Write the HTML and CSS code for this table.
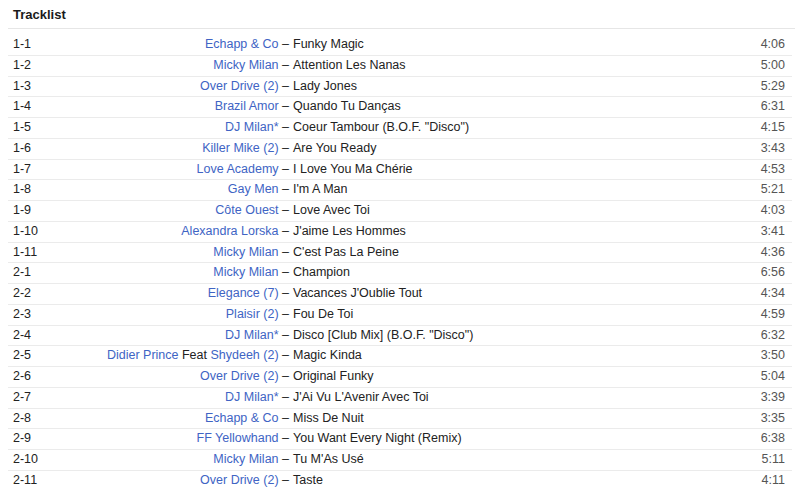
FILE: index.html
```html
<!DOCTYPE html>
<html>
<head>
<meta charset="utf-8">
<link rel="stylesheet" href="styles.css">
</head>
<body>
<section class="tracklist">
  <h2 class="heading">Tracklist</h2>
  <table class="tracks">
    <tbody>
      <tr><td class="pos">1-1</td><td class="artist"><a>Echapp &amp; Co</a> –</td><td class="title">Funky Magic</td><td class="dur">4:06</td></tr>
      <tr><td class="pos">1-2</td><td class="artist"><a>Micky Milan</a> –</td><td class="title">Attention Les Nanas</td><td class="dur">5:00</td></tr>
      <tr><td class="pos">1-3</td><td class="artist"><a>Over Drive (2)</a> –</td><td class="title">Lady Jones</td><td class="dur">5:29</td></tr>
      <tr><td class="pos">1-4</td><td class="artist"><a>Brazil Amor</a> –</td><td class="title">Quando Tu Danças</td><td class="dur">6:31</td></tr>
      <tr><td class="pos">1-5</td><td class="artist"><a>DJ Milan*</a> –</td><td class="title">Coeur Tambour (B.O.F. "Disco")</td><td class="dur">4:15</td></tr>
      <tr><td class="pos">1-6</td><td class="artist"><a>Killer Mike (2)</a> –</td><td class="title">Are You Ready</td><td class="dur">3:43</td></tr>
      <tr><td class="pos">1-7</td><td class="artist"><a>Love Academy</a> –</td><td class="title">I Love You Ma Chérie</td><td class="dur">4:53</td></tr>
      <tr><td class="pos">1-8</td><td class="artist"><a>Gay Men</a> –</td><td class="title">I'm A Man</td><td class="dur">5:21</td></tr>
      <tr><td class="pos">1-9</td><td class="artist"><a>Côte Ouest</a> –</td><td class="title">Love Avec Toi</td><td class="dur">4:03</td></tr>
      <tr><td class="pos">1-10</td><td class="artist"><a>Alexandra Lorska</a> –</td><td class="title">J'aime Les Hommes</td><td class="dur">3:41</td></tr>
      <tr><td class="pos">1-11</td><td class="artist"><a>Micky Milan</a> –</td><td class="title">C'est Pas La Peine</td><td class="dur">4:36</td></tr>
      <tr><td class="pos">2-1</td><td class="artist"><a>Micky Milan</a> –</td><td class="title">Champion</td><td class="dur">6:56</td></tr>
      <tr><td class="pos">2-2</td><td class="artist"><a>Elegance (7)</a> –</td><td class="title">Vacances J'Oublie Tout</td><td class="dur">4:34</td></tr>
      <tr><td class="pos">2-3</td><td class="artist"><a>Plaisir (2)</a> –</td><td class="title">Fou De Toi</td><td class="dur">4:59</td></tr>
      <tr><td class="pos">2-4</td><td class="artist"><a>DJ Milan*</a> –</td><td class="title">Disco [Club Mix] (B.O.F. "Disco")</td><td class="dur">6:32</td></tr>
      <tr><td class="pos">2-5</td><td class="artist"><a>Didier Prince</a> Feat <a>Shydeeh (2)</a> –</td><td class="title">Magic Kinda</td><td class="dur">3:50</td></tr>
      <tr><td class="pos">2-6</td><td class="artist"><a>Over Drive (2)</a> –</td><td class="title">Original Funky</td><td class="dur">5:04</td></tr>
      <tr><td class="pos">2-7</td><td class="artist"><a>DJ Milan*</a> –</td><td class="title">J'Ai Vu L'Avenir Avec Toi</td><td class="dur">3:39</td></tr>
      <tr><td class="pos">2-8</td><td class="artist"><a>Echapp &amp; Co</a> –</td><td class="title">Miss De Nuit</td><td class="dur">3:35</td></tr>
      <tr><td class="pos">2-9</td><td class="artist"><a>FF Yellowhand</a> –</td><td class="title">You Want Every Night (Remix)</td><td class="dur">6:38</td></tr>
      <tr><td class="pos">2-10</td><td class="artist"><a>Micky Milan</a> –</td><td class="title">Tu M'As Usé</td><td class="dur">5:11</td></tr>
      <tr><td class="pos">2-11</td><td class="artist"><a>Over Drive (2)</a> –</td><td class="title">Taste</td><td class="dur">4:11</td></tr>
    </tbody>
  </table>
</section>
</body>
</html>
```

FILE: styles.css
```css
html, body {
  margin: 0;
  padding: 0;
  background: #ffffff;
}

body {
  font-family: "Liberation Sans", Arial, sans-serif;
  color: #222222;
}

.tracklist {
  padding: 0 8px;
}

.heading {
  margin: 0;
  padding: 6px 5px 4px;
  font-size: 13px;
  line-height: 18px;
  font-weight: bold;
  color: #1a1a1a;
  border-bottom: 1px solid #e6e6e6;
  margin-right: -3px;
}

.tracks {
  width: 784px;
  margin-top: 6px;
  border-collapse: collapse;
  table-layout: fixed;
  font-size: 12.5px;
}

.tracks tr + tr td {
  border-top: 1px solid #ebebeb;
}

.tracks td {
  padding: 0;
  line-height: 19.75px;
  height: 19.75px;
  white-space: nowrap;
  vertical-align: middle;
}

.pos {
  width: 70px;
  padding-left: 5px !important;
  color: #222222;
}

.artist {
  width: 206px;
  text-align: right;
  color: #222222;
}

.artist a {
  color: #4064c4;
  text-decoration: none;
}

.title {
  padding-left: 4px !important;
  color: #222222;
}

.dur {
  width: 60px;
  text-align: right;
  padding-right: 7px !important;
  color: #555555;
}
```
